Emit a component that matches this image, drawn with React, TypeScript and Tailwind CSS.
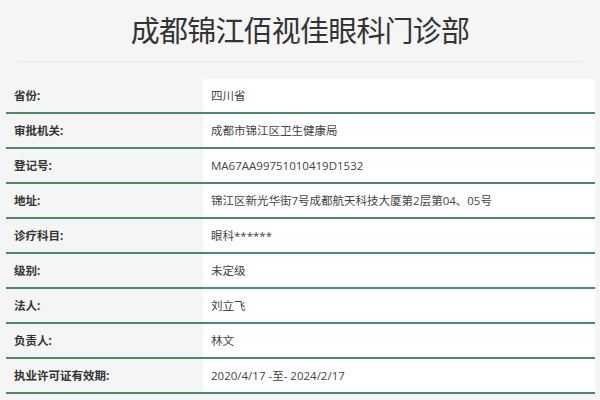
const rows: [string, string][] = [
  ["省份:", "四川省"],
  ["审批机关:", "成都市锦江区卫生健康局"],
  ["登记号:", "MA67AA99751010419D1532"],
  ["地址:", "锦江区新光华街7号成都航天科技大厦第2层第04、05号"],
  ["诊疗科目:", "眼科******"],
  ["级别:", "未定级"],
  ["法人:", "刘立飞"],
  ["负责人:", "林文"],
  ["执业许可证有效期:", "2020/4/17 -至- 2024/2/17"],
];

const App = () => {
  return (
    <div
      className="w-full h-[400px] overflow-hidden bg-[#f5f5f5] text-[#333]"
      style={{ fontFamily: '"Open Sans", "Noto Sans CJK SC", sans-serif' }}
    >
      <h1 className="h-[61px] flex items-center justify-center text-[29px] font-normal text-[#333] tracking-[-0.8px]">
        成都锦江佰视佳眼科门诊部
      </h1>
      <div className="mx-[17px] border-b border-[#e9e9e9]" />
      <div className="mt-[17px] ml-[6px] mr-[5px]">
        {rows.map(([label, value]) => (
          <div
            key={label}
            className="flex h-[35px] border-b-2 border-[#4d8a68]"
          >
            <div className="w-[197px] shrink-0 flex items-center pl-[8px] text-[11.5px] font-bold text-[#333]">
              {label}
            </div>
            <div className="flex-1 bg-white flex items-center pl-[8px] text-[11.5px] text-[#444]">
              {value}
            </div>
          </div>
        ))}
      </div>
    </div>
  );
};

export default App;
